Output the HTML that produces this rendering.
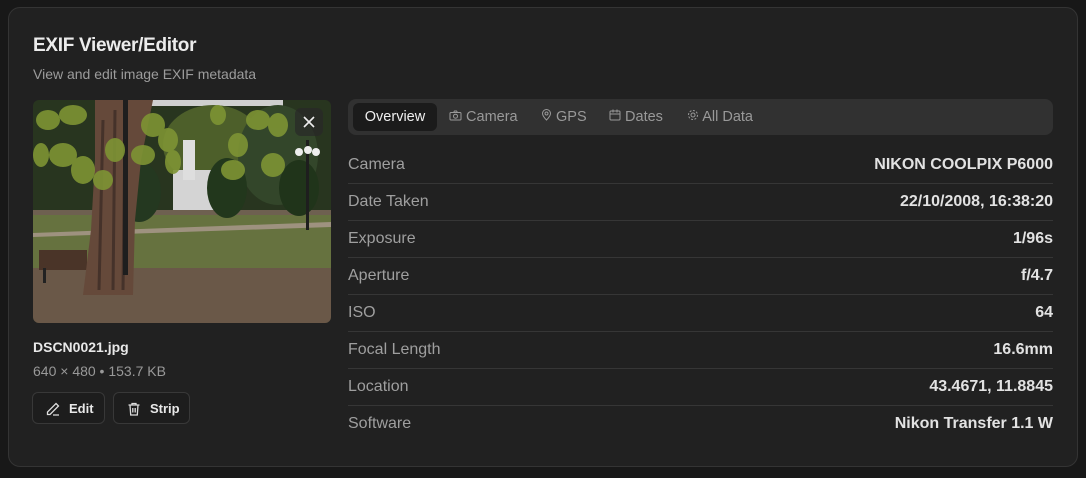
<!DOCTYPE html>
<html><head><meta charset="utf-8"><style>
*{margin:0;padding:0;box-sizing:border-box}
body{width:1086px;height:478px;background:#181818;font-family:"Liberation Sans",sans-serif;position:relative;overflow:hidden}
.card{position:absolute;left:8px;top:7px;width:1070px;height:460px;background:#212121;border:1px solid #343434;border-radius:12px}
.t{position:absolute;left:33px;top:35px;font-size:19px;font-weight:bold;color:#ececec;letter-spacing:-0.3px}
.s{position:absolute;left:33px;top:66px;font-size:14px;color:#9c9c9c}
.img{position:absolute;left:33px;top:100px;width:298px;height:223px;border-radius:6px;overflow:hidden}
.x{position:absolute;left:295px;top:108px;width:28px;height:28px;background:rgba(40,40,40,.7);border-radius:6px}
.fn{position:absolute;left:33px;top:339px;font-size:14px;font-weight:bold;color:#e8e8e8}
.sz{position:absolute;left:33px;top:363px;font-size:14px;color:#999}
.btn{position:absolute;top:392px;height:32px;border:1px solid #383838;border-radius:6px;background:#1d1d1d;color:#e8e8e8;font-size:13px;font-weight:bold}
.btn svg{position:absolute;left:12px;top:8px}
.btn span{position:absolute;top:8px}
.tabs{position:absolute;left:348px;top:99px;width:705px;height:36px;background:#313131;border-radius:8px}
.tab{position:absolute;top:10px;font-size:14.5px;color:#999}
.act{position:absolute;left:5px;top:4px;width:84px;height:28px;background:#1b1b1b;border-radius:6px;color:#f0f0f0;font-size:14.5px;text-align:center;line-height:28px}
.row{position:absolute;left:348px;width:705px;height:37px;border-bottom:1px solid #363636;font-size:16px}
.row .l{position:absolute;left:0;top:9px;color:#9f9f9f}
.row .v{position:absolute;right:0;top:9px;color:#e2e2e2;font-weight:bold}
</style></head><body>
<div class="card"></div>
<div class="t">EXIF Viewer/Editor</div>
<div class="s">View and edit image EXIF metadata</div>
<div class="img"><svg width="298" height="223" viewBox="0 0 298 223">
<rect width="298" height="223" fill="#28351f"/>
<rect x="100" y="0" width="150" height="6" fill="#cfcfcf"/>
<ellipse cx="180" cy="45" rx="50" ry="40" fill="#4d5f2a"/>
<ellipse cx="245" cy="55" rx="40" ry="50" fill="#33462a"/>
<rect x="0" y="112" width="298" height="58" fill="#66723f"/>
<rect x="0" y="110" width="298" height="5" fill="#6e6050"/>
<polygon points="0,133 298,122 298,127 0,137" fill="#9e927f"/>
<rect x="0" y="168" width="298" height="55" fill="#6a5848"/>
<rect x="140" y="70" width="55" height="40" fill="#d4d4d4"/>
<rect x="150" y="40" width="12" height="40" fill="#dedede"/>
<ellipse cx="106" cy="92" rx="22" ry="30" fill="#243820"/>
<ellipse cx="194" cy="88" rx="20" ry="30" fill="#22371c"/>
<ellipse cx="266" cy="88" rx="20" ry="28" fill="#20341a"/>
<rect x="6" y="150" width="48" height="20" fill="#4a3428"/>
<rect x="10" y="168" width="3" height="15" fill="#222"/>
<polygon points="62,0 120,0 108,60 102,120 100,195 50,195 58,130 62,60" fill="#65493a"/>
<path d="M70 20 L66 190 M82 10 L80 190 M92 30 L90 190" stroke="#45322a" stroke-width="3"/>
<rect x="90" y="0" width="5" height="175" fill="#1e1e1e"/>
<rect x="273" y="40" width="3" height="90" fill="#1e1e1e"/>
<circle cx="266" cy="52" r="4" fill="#eee"/><circle cx="275" cy="50" r="4" fill="#eee"/><circle cx="283" cy="52" r="4" fill="#eee"/>
<g fill="#7e9434" opacity="0.9">
<ellipse cx="15" cy="20" rx="12" ry="10"/><ellipse cx="40" cy="15" rx="14" ry="10"/><ellipse cx="30" cy="55" rx="14" ry="12"/><ellipse cx="50" cy="70" rx="12" ry="14"/><ellipse cx="70" cy="80" rx="10" ry="10"/><ellipse cx="82" cy="50" rx="10" ry="12"/><ellipse cx="120" cy="25" rx="12" ry="12"/><ellipse cx="135" cy="40" rx="10" ry="12"/><ellipse cx="110" cy="55" rx="12" ry="10"/><ellipse cx="140" cy="62" rx="8" ry="12"/><ellipse cx="200" cy="70" rx="12" ry="10"/><ellipse cx="205" cy="45" rx="10" ry="12"/><ellipse cx="225" cy="20" rx="12" ry="10"/><ellipse cx="245" cy="25" rx="10" ry="12"/><ellipse cx="240" cy="65" rx="12" ry="12"/><ellipse cx="185" cy="15" rx="8" ry="10"/><ellipse cx="8" cy="55" rx="8" ry="12"/>
</g></svg></div>
<div class="x"><svg width="28" height="28"><path d="M9 9L19 19M19 9L9 19" stroke="#eee" stroke-width="1.6"/></svg></div>
<div class="fn">DSCN0021.jpg</div>
<div class="sz">640 × 480 • 153.7 KB</div>
<div class="btn" style="left:32px;width:73px"><svg width="16" height="16" viewBox="0 0 16 16" fill="none" stroke="#ddd" stroke-width="1.3"><path d="M11 2.5l2.5 2.5L5 13.5H2.5V11z M8 14h6"/></svg><span style="left:36px">Edit</span></div>
<div class="btn" style="left:113px;width:77px"><svg width="16" height="16" viewBox="0 0 16 16" fill="none" stroke="#ddd" stroke-width="1.3"><path d="M2.5 4h11M6 4V2.5h4V4M4 4l.7 10h6.6L12 4M6.8 7v4.5M9.2 7v4.5"/></svg><span style="left:36px">Strip</span></div>
<div class="tabs">
<div class="act">Overview</div>
<div class="tab" style="left:101px"><svg width="13" height="11" viewBox="0 0 13 11" fill="none" stroke="#999" stroke-width="1"><rect x="1" y="2.5" width="11" height="7.5" rx="1"/><circle cx="6.5" cy="6.2" r="2"/><path d="M4.5 2.5l1-1.5h2l1 1.5"/></svg> Camera</div>
<div class="tab" style="left:193px"><svg width="11" height="12" viewBox="0 0 11 12" fill="none" stroke="#999" stroke-width="1"><path d="M5.5 11C2.5 8 1.5 6 1.5 4.5a4 4 0 018 0C9.5 6 8.5 8 5.5 11z"/><circle cx="5.5" cy="4.5" r="1.5"/></svg> GPS</div>
<div class="tab" style="left:261px"><svg width="12" height="12" viewBox="0 0 12 12" fill="none" stroke="#999" stroke-width="1"><rect x="1" y="2" width="10" height="9" rx="1"/><path d="M1 5h10M4 0.5v3M8 0.5v3"/></svg> Dates</div>
<div class="tab" style="left:339px"><svg width="12" height="12" viewBox="0 0 12 12" fill="none" stroke="#999" stroke-width="1"><circle cx="6" cy="6" r="2"/><circle cx="6" cy="6" r="4.5" stroke-dasharray="2 1.5"/></svg> All Data</div>
</div>
<div class="row" style="top:147px"><span class="l">Camera</span><span class="v">NIKON COOLPIX P6000</span></div>
<div class="row" style="top:184px"><span class="l">Date Taken</span><span class="v">22/10/2008, 16:38:20</span></div>
<div class="row" style="top:221px"><span class="l">Exposure</span><span class="v">1/96s</span></div>
<div class="row" style="top:258px"><span class="l">Aperture</span><span class="v">f/4.7</span></div>
<div class="row" style="top:295px"><span class="l">ISO</span><span class="v">64</span></div>
<div class="row" style="top:332px"><span class="l">Focal Length</span><span class="v">16.6mm</span></div>
<div class="row" style="top:369px"><span class="l">Location</span><span class="v">43.4671, 11.8845</span></div>
<div class="row" style="top:406px;border-bottom:none"><span class="l">Software</span><span class="v">Nikon Transfer 1.1 W</span></div>
</body></html>
